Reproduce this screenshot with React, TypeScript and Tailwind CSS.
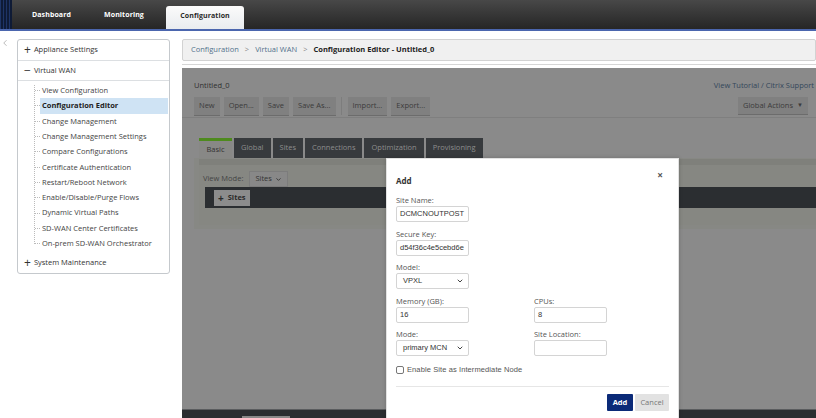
import { ChevronDown, ChevronLeft } from "lucide-react";

const subItems = [
  "View Configuration",
  "Configuration Editor",
  "Change Management",
  "Change Management Settings",
  "Compare Configurations",
  "Certificate Authentication",
  "Restart/Reboot Network",
  "Enable/Disable/Purge Flows",
  "Dynamic Virtual Paths",
  "SD-WAN Center Certificates",
  "On-prem SD-WAN Orchestrator",
];

const toolbar = [["New", "Open...", "Save", "Save As..."], ["Import...", "Export..."]];
const tabs = ["Global", "Sites", "Connections", "Optimization", "Provisioning"];

const Field = ({ label, value, select }: { label: string; value: string; select?: boolean }) => (
  <div className="flex flex-col">
    <span className="text-[7.5px] text-[#555] leading-[10px] mb-[1px]">{label}</span>
    <div className="w-[73px] h-[16px] border border-[#d4d4d4] rounded-[2px] flex items-center justify-between px-[3px] text-[7.5px] text-[#333] font-['Liberation_Sans',sans-serif]">
      <span className={select ? "pl-[3px]" : ""}>{value}</span>
      {select && <ChevronDown size={8} strokeWidth={3} className="text-[#444] mr-[1px]" />}
    </div>
  </div>
);

export default function App() {
  return (
    <div className="relative w-[816px] h-[418px] overflow-hidden bg-white font-['Open_Sans',sans-serif]">
      {/* header */}
      <div className="h-[31px] flex bg-gradient-to-b from-[#484848] to-[#262626] border-b-2 border-[#4b66ae]">
        <div className="w-[12px] h-full bg-[#0f1b36] bg-[repeating-linear-gradient(90deg,#1e3466_0px,#1e3466_1px,transparent_1px,transparent_3px)]" />
        <div className="flex items-end pl-[20px] text-[7px] font-bold tracking-[0.1px]">
          <span className="text-white pb-[9px] w-[72px]">Dashboard</span>
          <span className="text-white pb-[9px] w-[62px]">Monitoring</span>
          <span className="h-[23px] w-[78px] rounded-t-[3px] bg-gradient-to-b from-[#fbfbfb] to-[#e9ecef] text-[#2a2a2a] flex items-center justify-center pb-[2px]">
            Configuration
          </span>
        </div>
      </div>

      <div className="flex h-[387px]">
        {/* left strip */}
        <div className="w-[17px] pt-[7px]">
          <ChevronLeft size={10} strokeWidth={1.2} className="text-[#777]" />
        </div>

        {/* sidebar */}
        <div className="w-[153px] mt-[8px] self-start border border-[#c5c9cd] rounded-[3px] text-[7.5px] text-[#333]">
          <div className="h-[21px] flex items-center pl-[6px] border-b border-[#dcdfe2]">
            <span className="text-[12px] leading-none mr-[3px] text-[#333]">+</span>Appliance Settings
          </div>
          <div className="h-[20px] flex items-center pl-[6px] border-b border-[#dcdfe2]">
            <span className="text-[12px] leading-none mr-[3px] text-[#333]">−</span>Virtual WAN
          </div>
          <div className="relative pt-[2px] pb-[1px]">
            <div className="absolute left-[16px] top-[4px] bottom-[8px] border-l border-dotted border-[#bbb]" />
            {subItems.map((s) => (
              <div key={s} className="relative h-[15.3px] flex items-center">
                <div className="absolute left-[17px] w-[5px] border-t border-dotted border-[#bbb]" />
                <span
                  className={
                    s === "Configuration Editor"
                      ? "ml-[22px] flex-1 h-full flex items-center pl-[2px] bg-[#cfe3f4] font-bold text-[#222] mr-[1px]"
                      : "ml-[22px] pl-[2px] text-[#444]"
                  }
                >
                  {s}
                </span>
              </div>
            ))}
          </div>
          <div className="h-[21px] flex items-center pl-[6px]">
            <span className="text-[12px] leading-none mr-[3px] text-[#333]">+</span>System Maintenance
          </div>
        </div>

        <div className="w-[12px]" />

        {/* main */}
        <div className="flex-1 flex flex-col">
          <div className="mt-[8px] h-[22px] bg-[#f0f0f0] border border-[#d2d2d2] rounded-[2px] flex items-center pl-[8px] gap-[6px] text-[7.5px] text-[#52708c]">
            <span>Configuration</span>
            <span className="text-[#888]">&gt;</span>
            <span>Virtual WAN</span>
            <span className="text-[#888]">&gt;</span>
            <span className="font-bold text-[#222]">Configuration Editor - Untitled_0</span>
          </div>
          <div className="mt-[3px] border-t border-[#d6d6d6]" />

          <div className="mt-[3px] flex-1 bg-[#8a8a8a] flex flex-col">
            <div className="flex justify-between items-start pt-[12px] pr-[2px] text-[7.5px]">
              <div className="pl-[12px] flex flex-col">
                <span className="text-[#2f2f2f] leading-[10px]">Untitled_0</span>
                <div className="flex mt-[7px] items-center">
                  {toolbar.map((grp, gi) => (
                    <div key={gi} className={gi === 1 ? "flex gap-[4px] ml-[5px] pl-[6px] border-l border-[#7d7d7d]" : "flex gap-[4px]"}>
                      {grp.map((b) => (
                        <span key={b} className="h-[18px] px-[5px] flex items-center bg-[#808080] shadow-[0_1px_0_#6c6c6c] text-[#3b3b3b]">
                          {b}
                        </span>
                      ))}
                    </div>
                  ))}
                </div>
              </div>
              <div className="flex flex-col items-end">
                <span className="text-[#33475a] leading-[10px]">View Tutorial / Citrix Support</span>
                <span className="mt-[7px] mr-[6px] h-[17px] px-[5px] flex items-center gap-[4px] bg-[#808080] shadow-[0_1px_0_#6c6c6c] text-[#3b3b3b]">
                  Global Actions
                  <span className="text-[6px]">▼</span>
                </span>
              </div>
            </div>
            <div className="mt-[2px] border-t border-[#7f7f7f]" />

            <div className="mt-[20px] pl-[17px] flex gap-[2px] text-[7.5px]">
              <span className="h-[20px] w-[33px] flex items-center justify-center bg-[#888886] border-t-[3px] border-[#4e8a1e] text-[#333] pt-[1px]">
                Basic
              </span>
              {tabs.map((t) => (
                <span key={t} className="h-[20px] px-[7px] flex items-center bg-[#373a3d] text-[#8d8d8d]">
                  {t}
                </span>
              ))}
            </div>
            <div className="ml-[12px] h-[71px] bg-[#878884] pt-[1px] pl-[5px]">
              <div className="bg-[#7f807b] h-[6px]" />
              <div className="bg-[#868782] h-[60px] pt-[6px] pl-[4px] text-[7.5px]">
                <div className="flex items-center gap-[6px]">
                  <span className="text-[#444]">View Mode:</span>
                  <span className="h-[16px] w-[39px] bg-[#888] border border-[#7c7c7c] flex items-center justify-between px-[5px] text-[#333]">
                    Sites
                    <ChevronDown size={7} strokeWidth={3} className="text-[#333]" />
                  </span>
                </div>
                <div className="ml-[2px] h-[21px] bg-[#2b2e31] flex items-center pl-[9px]">
                  <span className="h-[16px] px-[4px] flex items-center gap-[4px] bg-[#8c8c8c] text-[#2a2a2a] font-bold">
                    <span className="text-[10px] leading-none">+</span>Sites
                  </span>
                </div>
              </div>
            </div>
            <div className="flex-1" />
            <div className="h-[9px] bg-[#2a2d30] border-t border-[#5a5c5e] pl-[60px]">
              <div className="w-[48px] h-[2px] mt-[6px] bg-[#888]" />
            </div>
          </div>
        </div>
      </div>

      {/* modal */}
      <div className="absolute left-[386px] top-[158px] w-[293px] h-[270px] bg-white border border-[#e2e2e2] shadow-[0_0_4px_rgba(0,0,0,0.2)] pl-[9px] pr-[9px]">
        <div className="relative pt-[17px]">
          <span className="absolute right-[6px] top-[9px] text-[10px] font-bold text-[#555]">×</span>
          <div className="text-[8px] font-bold text-[#333] leading-[10px]">Add</div>
        </div>
        <div className="mt-[9px] flex flex-col gap-[6.5px]">
          <Field label="Site Name:" value="DCMCNOUTPOST" />
          <Field label="Secure Key:" value="d54f36c4e5cebd6e" />
          <Field label="Model:" value="VPXL" select />
          <div className="flex gap-[65px]">
            <Field label="Memory (GB):" value="16" />
            <Field label="CPUs:" value="8" />
          </div>
          <div className="flex gap-[65px]">
            <Field label="Mode:" value="primary MCN" select />
            <Field label="Site Location:" value="" />
          </div>
        </div>
        <div className="mt-[8px] flex items-center gap-[3px] text-[7.5px] text-[#555] font-['Liberation_Sans',sans-serif]">
          <span className="w-[8px] h-[8px] border border-[#777] rounded-[2px]" />
          <span className="tracking-[0.1px]">Enable Site as Intermediate Node</span>
        </div>
        <div className="mt-[11px] border-t border-[#e6e6e6]" />
        <div className="mt-[7px] flex justify-end gap-[2px] text-[7.5px]">
          <span className="h-[17px] w-[26px] flex items-center justify-center bg-[#0b2a78] text-white font-bold rounded-[1px]">Add</span>
          <span className="h-[17px] w-[34px] flex items-center justify-center bg-[#e2e2e2] text-[#777] rounded-[1px]">Cancel</span>
        </div>
      </div>
    </div>
  );
}
